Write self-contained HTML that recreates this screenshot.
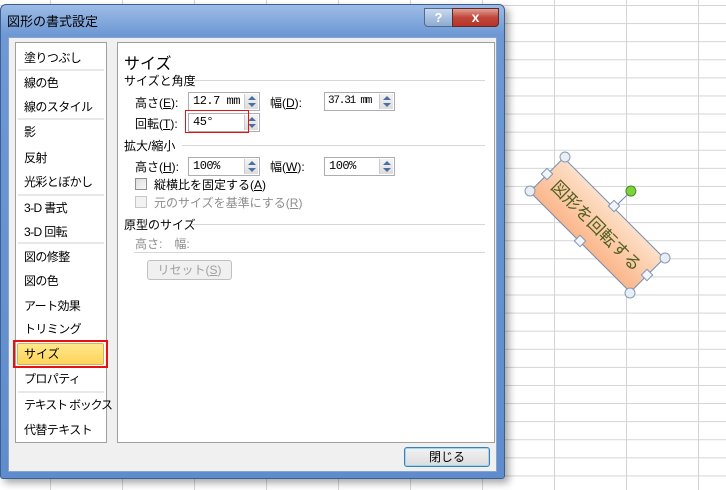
<!DOCTYPE html>
<html><head><meta charset="utf-8"><style>
*{margin:0;padding:0;box-sizing:border-box}
body{width:726px;height:490px;overflow:hidden;background:#fff;position:relative;font-family:"Liberation Sans","Noto Sans CJK JP",sans-serif;font-size:12px;color:#000}
.grid{position:absolute;inset:0;background-image:linear-gradient(to right,#d4d4d4 1px,transparent 1px),linear-gradient(to bottom,#d4d4d4 1px,transparent 1px);background-size:72px 18px,72px 18.1px;background-position:50px 0,0 5px}
.a{position:absolute;white-space:nowrap}
.dlg{position:absolute;left:0;top:4px;width:505px;height:475px;background:linear-gradient(#9dbce6,#6d98d4 30px,#5f8ccd);border:1px solid #3d5f8f;border-radius:6px 6px 3px 3px;box-shadow:4px 4px 8px rgba(0,0,0,.35)}
.in{position:absolute;left:7px;top:32px;width:489px;height:435px;background:#f0f0f0;border:1px solid #8aa3c8}
.box{position:absolute;background:#fff;border:1px solid #a0a0a0}
.sep{position:absolute;height:2px;background:#e8e8e8}
.hl{position:absolute;background:#d7d7d7;height:1px}
.inp{position:absolute;height:19px;border:1px solid #abadb3;background:#fff;padding-left:4px;line-height:17px;font-size:12px;font-family:"Liberation Mono",monospace;letter-spacing:-0.5px}
.sp{position:absolute;right:1px;top:1px;width:14px;height:15px;background:linear-gradient(#f4f4f4,#dcdcdc);border-left:1px solid #ccc}
.sp:before{content:"";position:absolute;left:3px;top:2px;border:4px solid transparent;border-bottom:4px solid #4a6fa0;border-top:0}
.sp:after{content:"";position:absolute;left:3px;top:9px;border:4px solid transparent;border-top:4px solid #4a6fa0;border-bottom:0}
u{text-decoration:underline}
.lst .a{letter-spacing:-0.6px}
</style></head><body>
<div class="grid"></div>
<div class="dlg">
<div class="a" style="left:6px;top:6px;font-size:13px;color:#000">図形の書式設定</div>
<div class="a" style="left:423px;top:3px;width:29px;height:19px;border:1px solid #4e6b93;border-radius:0 0 0 4px;background:linear-gradient(#c8d8ee,#8eaad0);text-align:center;color:#fff;font-weight:bold;font-size:13px;line-height:17px">?</div>
<div class="a" style="left:451px;top:3px;width:47px;height:19px;border:1px solid #5e2b2b;border-radius:0 0 4px 0;background:linear-gradient(#e0a094,#c0463a 50%,#b83328);text-align:center;color:#fff;font-weight:bold;font-size:14px;line-height:17px">x</div>
<div class="in"></div>
</div>
<div class="box" style="left:15px;top:42px;width:92px;height:401px"></div>
<div class="box" style="left:117px;top:42px;width:378px;height:401px"></div>
<div class="lst" style="position:absolute;left:24px;font-size:12px">
<div class="a" style="top:49px">塗りつぶし</div>
<div class="a" style="top:74px">線の色</div>
<div class="a" style="top:98px">線のスタイル</div>
<div class="a" style="top:123px">影</div>
<div class="a" style="top:149px">反射</div>
<div class="a" style="top:173px">光彩とぼかし</div>
<div class="a" style="top:199px">3-D 書式</div>
<div class="a" style="top:223px">3-D 回転</div>
<div class="a" style="top:248px">図の修整</div>
<div class="a" style="top:272px">図の色</div>
<div class="a" style="top:297px">アート効果</div>
<div class="a" style="top:320px">トリミング</div>
<div class="a" style="top:370px">プロパティ</div>
<div class="a" style="top:396px;letter-spacing:-1.2px">テキスト ボックス</div>
<div class="a" style="top:421px">代替テキスト</div>
</div>
<div class="sep" style="left:18px;top:69px;width:86px"></div>
<div class="sep" style="left:18px;top:118px;width:86px"></div>
<div class="sep" style="left:18px;top:194px;width:86px"></div>
<div class="sep" style="left:18px;top:242px;width:86px"></div>
<div class="sep" style="left:18px;top:391px;width:86px"></div>
<div class="a" style="left:13px;top:340px;width:95px;height:28px;border:2px solid #e81010"></div>
<div class="a" style="left:17px;top:343px;width:87px;height:22px;background:linear-gradient(#ffe88a,#ffd45a);border:1px solid #d2b060;border-radius:2px;padding-left:6px;line-height:20px">サイズ</div>

<div class="a" style="left:124px;top:50px;font-size:16px">サイズ</div>
<div class="a" style="left:124px;top:72px">サイズと角度</div><div class="hl" style="left:194px;top:80px;width:291px"></div>
<div class="a" style="left:135px;top:94px">高さ(<u>E</u>):</div>
<div class="inp" style="left:188px;top:92px;width:72px">12.7 mm<div class="sp"></div></div>
<div class="a" style="left:270px;top:94px">幅(<u>D</u>):</div>
<div class="inp" style="left:324px;top:92px;width:71px;letter-spacing:-1.2px;font-size:11px;padding-left:3px">37.31 mm<div class="sp"></div></div>
<div class="a" style="left:135px;top:115px">回転(<u>T</u>):</div>
<div class="inp" style="left:188px;top:113px;width:72px">45°<div class="sp"></div></div>
<div class="a" style="left:185px;top:110px;width:64px;height:23px;border:1px solid #e81010"></div>
<div class="a" style="left:124px;top:137px">拡大/縮小</div><div class="hl" style="left:182px;top:145px;width:303px"></div>
<div class="a" style="left:135px;top:158px">高さ(<u>H</u>):</div>
<div class="inp" style="left:188px;top:157px;width:72px">100%<div class="sp"></div></div>
<div class="a" style="left:270px;top:158px">幅(<u>W</u>):</div>
<div class="inp" style="left:324px;top:157px;width:71px">100%<div class="sp"></div></div>
<div class="a" style="left:135px;top:178px;width:12px;height:12px;border:1px solid #8f8f8f;background:linear-gradient(135deg,#ddd,#f8f8f8)"></div>
<div class="a" style="left:154px;top:176px">縦横比を固定する(<u>A</u>)</div>
<div class="a" style="left:135px;top:196px;width:12px;height:12px;border:1px solid #c8c8c8;background:#f2f2f2"></div>
<div class="a" style="left:154px;top:194px;color:#8d8d8d">元のサイズを基準にする(<u>R</u>)</div>
<div class="a" style="left:124px;top:216px">原型のサイズ</div><div class="hl" style="left:192px;top:224px;width:293px"></div>
<div class="a" style="left:135px;top:235px;color:#8d8d8d">高さ:　幅:</div>
<div class="hl" style="left:134px;top:252px;width:351px"></div>
<div class="a" style="left:147px;top:260px;width:85px;height:20px;border:1px solid #c0c0c0;border-radius:3px;background:#f0f0f0;color:#a0a0a0;text-align:center;line-height:18px">リセット(<u>S</u>)</div>
<div class="a" style="left:404px;top:447px;width:86px;height:20px;border:1px solid #3c7fb1;border-radius:3px;background:linear-gradient(#f2f2f2,#dcdcdc);text-align:center;line-height:18px;box-shadow:inset 0 0 0 1px #9fd5f5">閉じる</div>

<svg class="a" style="left:0;top:0" width="726" height="490">
<defs><linearGradient id="g" x1="0" y1="0" x2="0" y2="1"><stop offset="0" stop-color="#fde0c8"/><stop offset="1" stop-color="#fbb68a"/></linearGradient></defs>
<g transform="translate(597,225) rotate(45)">
<rect x="-71" y="-24" width="142" height="48" fill="url(#g)" stroke="#6e8bb5" stroke-width="1"/>
<text x="0" y="7" text-anchor="middle" font-size="17" fill="#4f5f20" font-family="Liberation Sans,Noto Sans CJK JP,sans-serif">図形を回転する</text>
<line x1="0" y1="-24" x2="0" y2="-46" stroke="#6e8bb5"/>
<circle cx="0" cy="-48" r="5" fill="#7ad43a" stroke="#4a8a2a"/>
</g>
<g fill="#e8eef6" stroke="#8a9ab0">
<circle cx="565" cy="157" r="5"/><circle cx="530" cy="191" r="5"/><circle cx="665" cy="258" r="5"/><circle cx="630" cy="293" r="5"/>
</g>
<g fill="#f2f6fb" stroke="#7d95b8">
<rect x="543" y="170" width="8" height="8" transform="rotate(45 547 174)"/>
<rect x="610" y="202" width="8" height="8" transform="rotate(45 614 206)"/>
<rect x="576" y="237" width="8" height="8" transform="rotate(45 580 241)"/>
<rect x="643" y="271" width="8" height="8" transform="rotate(45 647 275)"/>
</g>
</svg>
</body></html>
